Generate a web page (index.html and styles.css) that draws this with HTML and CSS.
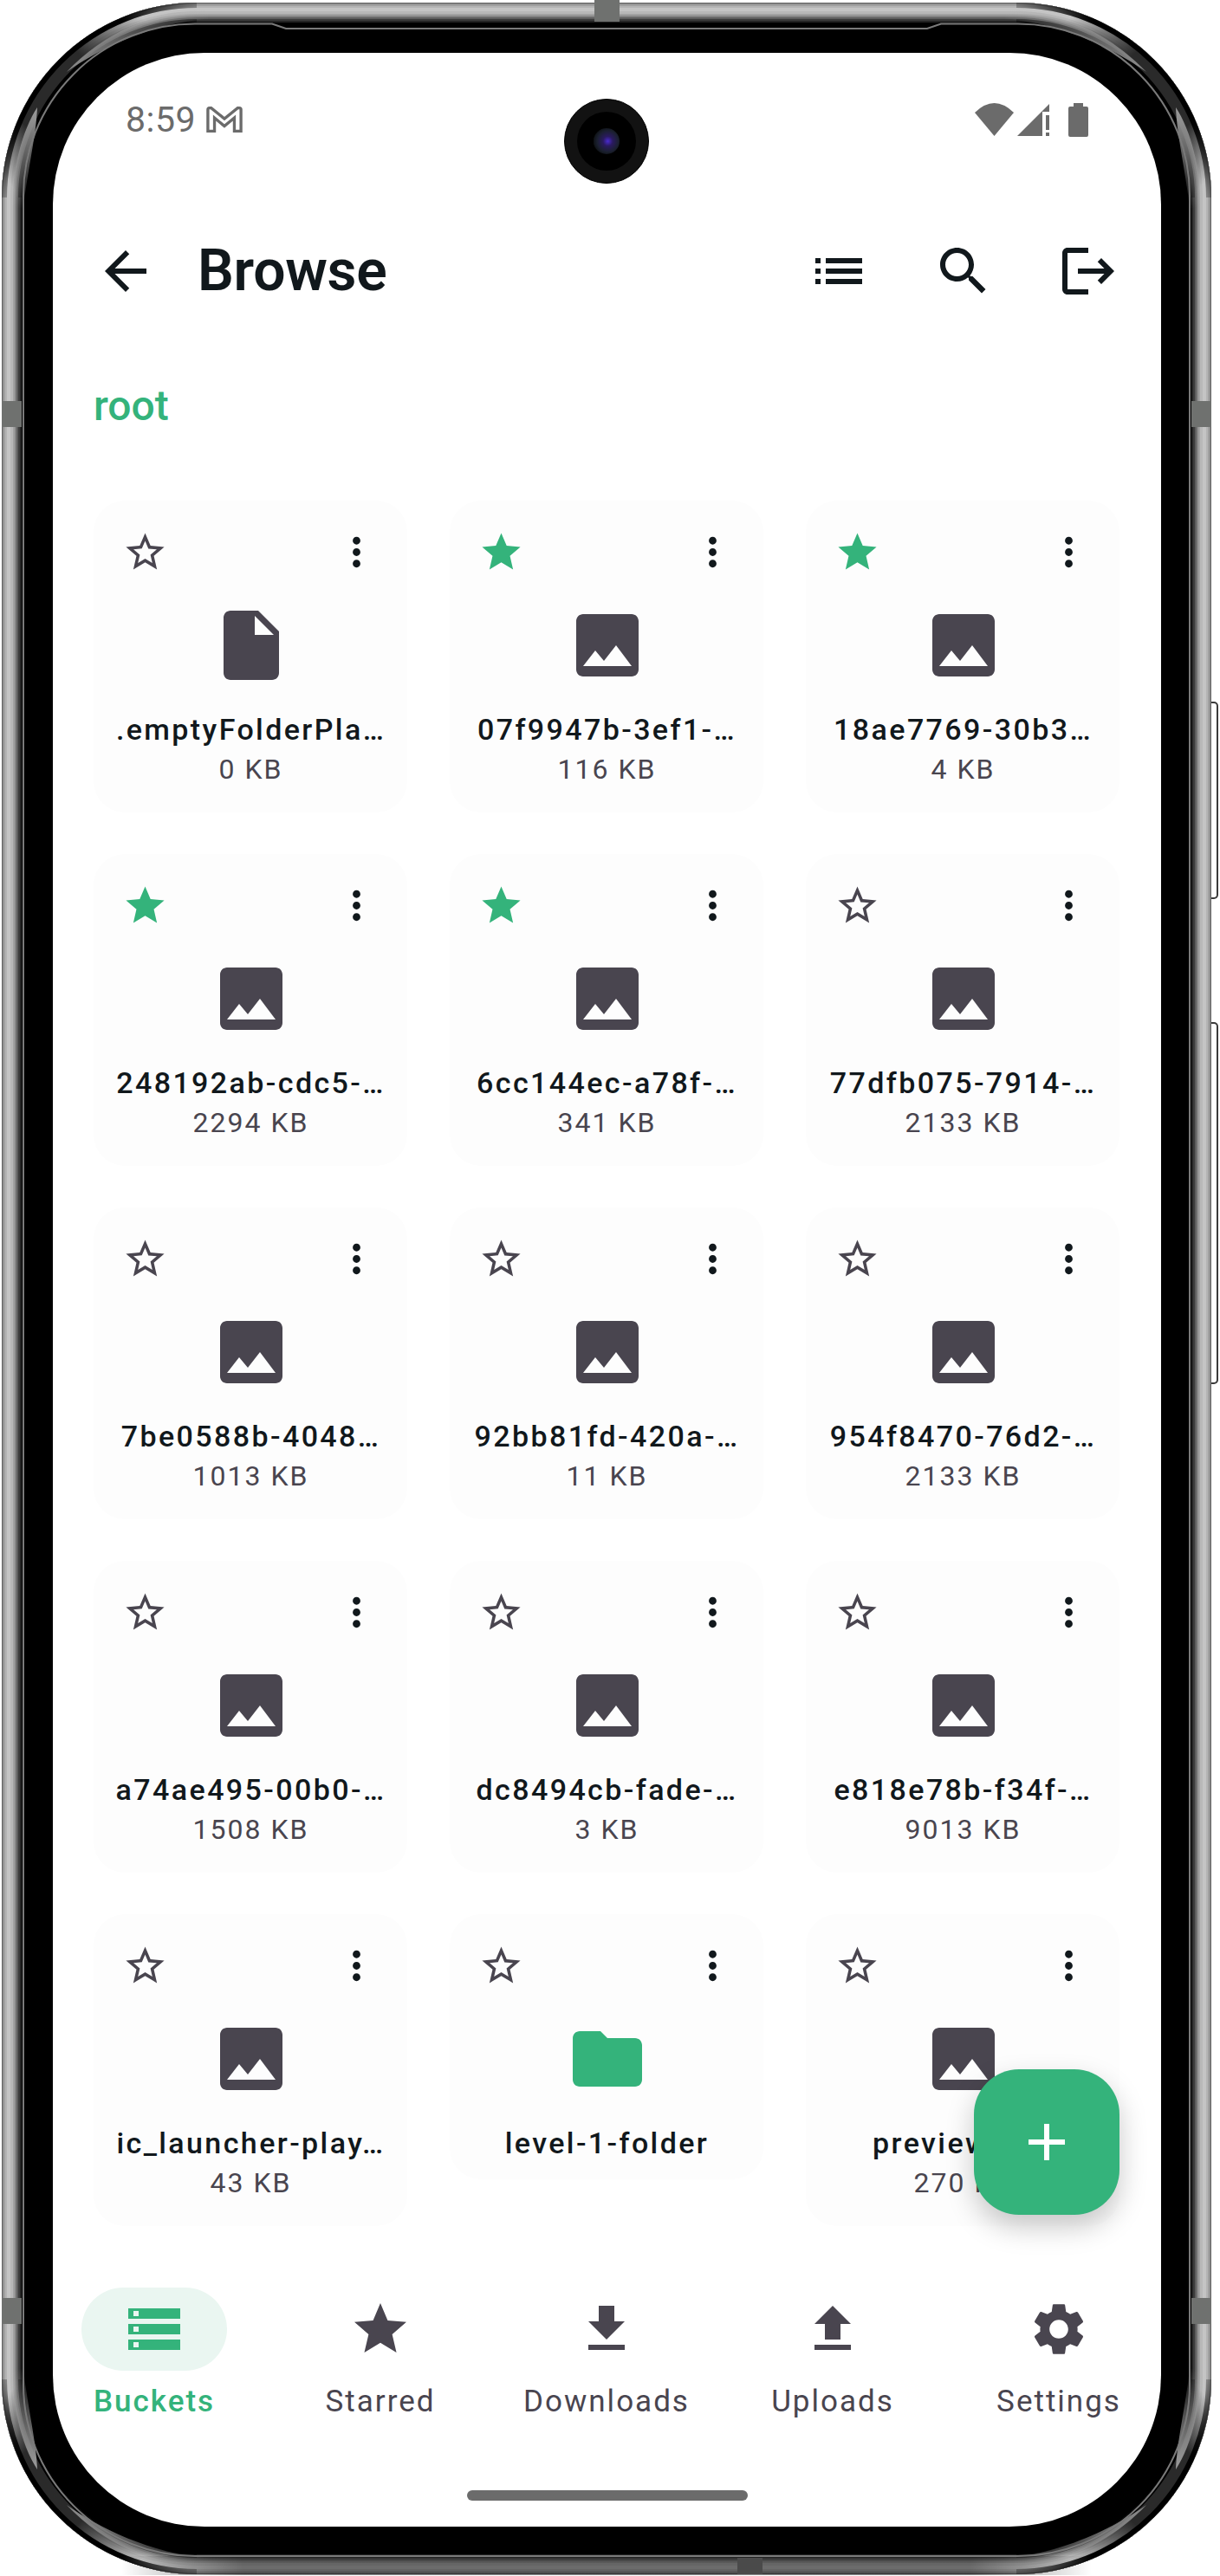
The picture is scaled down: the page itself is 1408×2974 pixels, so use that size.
FILE: index.html
```html
<!DOCTYPE html>
<html lang="en">
<head>
    <meta charset="UTF-8">
    <meta name="viewport" content="width=device-width, initial-scale=1.0">
    <title>Browse</title>
    <link rel="stylesheet" href="styles.css">
</head>
<body>
    <!-- Shared icons -->
    <svg class="icon-sprite" aria-hidden="true">
        <symbol id="i-star-line" viewBox="0 0 24 24"><path d="M22 9.24l-7.19-.62L12 2 9.19 8.63 2 9.24l5.46 4.73L5.82 21 12 17.27 18.18 21l-1.63-7.03L22 9.24zM12 15.4l-3.76 2.27 1-4.28-3.32-2.88 4.38-.38L12 6.1l1.71 4.04 4.38.38-3.32 2.88 1 4.28L12 15.4z"/></symbol>
        <symbol id="i-star" viewBox="0 0 24 24"><path d="M12 17.27L18.18 21l-1.64-7.03L22 9.24l-7.19-.61L12 2 9.19 8.63 2 9.24l5.46 4.73L5.82 21z"/></symbol>
        <symbol id="i-more" viewBox="0 0 24 24"><path d="M12 8c1.1 0 2-.9 2-2s-.9-2-2-2-2 .9-2 2 .9 2 2 2zm0 2c-1.1 0-2 .9-2 2s.9 2 2 2 2-.9 2-2-.9-2-2-2zm0 6c-1.1 0-2 .9-2 2s.9 2 2 2 2-.9 2-2-.9-2-2-2z"/></symbol>
        <symbol id="i-image" viewBox="0 0 24 24"><path d="M21 19V5c0-1.1-.9-2-2-2H5c-1.1 0-2 .9-2 2v14c0 1.1.9 2 2 2h14c1.1 0 2-.9 2-2zM8.500 13.500l2.500 3.010L14.500 12l4.500 6H5l3.500-4.500z"/></symbol>
        <symbol id="i-file" viewBox="0 0 24 24"><path d="M6 2c-1.100 0-2 .9-2 2v16c0 1.100.9 2 2 2h12c1.100 0 2-.9 2-2V8l-6-6H6zm7 7V3.500L18.500 9H13z"/></symbol>
        <symbol id="i-folder" viewBox="0 0 24 24"><path d="M10 4H4c-1.100 0-1.990.9-1.990 2L2 18c0 1.100.9 2 2 2h16c1.100 0 2-.9 2-2V8c0-1.100-.9-2-2-2h-8l-2-2z"/></symbol>
    </svg>

    <div class="device">
        <div class="screen">
            <div class="status-bar">
                <div class="status-left">
                    <span class="clock">8:59</span>
                    <svg class="gmail" viewBox="0 0 44 32"><path d="M2 30V4q0-2 2-2h2l16 13L38 2h2q2 0 2 2v26h-8V14L22 24 10 14v16z"/></svg>
                </div>
                <div class="status-right">
                    <svg class="wifi" viewBox="0 0 45 38"><path d="M22.500 38L0 11Q22.500-11 45 11z"/></svg>
                    <svg class="signal" viewBox="0 0 37 37"><path d="M37 0v9h-8v28H0z"/><rect x="33" y="13" width="4" height="17"/><rect x="33" y="33" width="4" height="4"/></svg>
                    <svg class="battery" viewBox="0 0 23 39"><path d="M6 0h11v4h4q2 0 2 2v31q0 2-2 2H2q-2 0-2-2V6q0-2 2-2h4z"/></svg>
                </div>
            </div>

            <header class="app-bar">
                <svg class="bar-icon" viewBox="0 0 24 24"><path d="M20 11H7.830l5.590-5.590L12 4l-8 8 8 8 1.410-1.410L7.830 13H20v-2z"/></svg>
                <h1 class="title">Browse</h1>
                <svg class="bar-icon" viewBox="0 0 24 24"><path d="M3 13h2v-2H3v2zm0 4h2v-2H3v2zm0-8h2V7H3v2zm4 4h14v-2H7v2zm0 4h14v-2H7v2zM7 7v2h14V7H7z"/></svg>
                <svg class="bar-icon" viewBox="0 0 24 24"><path d="M15.500 14h-.79l-.28-.27C15.410 12.590 16 11.110 16 9.500 16 5.910 13.090 3 9.500 3S3 5.910 3 9.500 5.910 16 9.500 16c1.610 0 3.090-.59 4.230-1.570l.27.28v.79l5 4.990L20.490 19l-4.990-5zm-6 0C7.010 14 5 11.990 5 9.500S7.010 5 9.500 5 14 7.010 14 9.500 11.990 14 9.500 14z"/></svg>
                <svg class="bar-icon" viewBox="0 0 24 24"><path d="M17 7l-1.410 1.410L18.170 11H8v2h10.170l-2.580 2.580L17 17l5-5zM4 5h8V3H4c-1.100 0-2 .9-2 2v14c0 1.100.9 2 2 2h8v-2H4V5z"/></svg>
            </header>

            <div class="crumb">root</div>

            <main class="file-grid">
                <div class="card">
                    <div class="card-top"><svg class="star"><use href="#i-star-line"/></svg><svg class="more"><use href="#i-more"/></svg></div>
                    <svg class="file-icon"><use href="#i-file"/></svg>
                    <div class="name">.emptyFolderPla…</div>
                    <div class="size">0 KB</div>
                </div>
                <div class="card">
                    <div class="card-top"><svg class="star on"><use href="#i-star"/></svg><svg class="more"><use href="#i-more"/></svg></div>
                    <svg class="file-icon"><use href="#i-image"/></svg>
                    <div class="name">07f9947b-3ef1-…</div>
                    <div class="size">116 KB</div>
                </div>
                <div class="card">
                    <div class="card-top"><svg class="star on"><use href="#i-star"/></svg><svg class="more"><use href="#i-more"/></svg></div>
                    <svg class="file-icon"><use href="#i-image"/></svg>
                    <div class="name">18ae7769-30b3…</div>
                    <div class="size">4 KB</div>
                </div>

                <div class="card">
                    <div class="card-top"><svg class="star on"><use href="#i-star"/></svg><svg class="more"><use href="#i-more"/></svg></div>
                    <svg class="file-icon"><use href="#i-image"/></svg>
                    <div class="name">248192ab-cdc5-…</div>
                    <div class="size">2294 KB</div>
                </div>
                <div class="card">
                    <div class="card-top"><svg class="star on"><use href="#i-star"/></svg><svg class="more"><use href="#i-more"/></svg></div>
                    <svg class="file-icon"><use href="#i-image"/></svg>
                    <div class="name">6cc144ec-a78f-…</div>
                    <div class="size">341 KB</div>
                </div>
                <div class="card">
                    <div class="card-top"><svg class="star"><use href="#i-star-line"/></svg><svg class="more"><use href="#i-more"/></svg></div>
                    <svg class="file-icon"><use href="#i-image"/></svg>
                    <div class="name">77dfb075-7914-…</div>
                    <div class="size">2133 KB</div>
                </div>

                <div class="card">
                    <div class="card-top"><svg class="star"><use href="#i-star-line"/></svg><svg class="more"><use href="#i-more"/></svg></div>
                    <svg class="file-icon"><use href="#i-image"/></svg>
                    <div class="name">7be0588b-4048…</div>
                    <div class="size">1013 KB</div>
                </div>
                <div class="card">
                    <div class="card-top"><svg class="star"><use href="#i-star-line"/></svg><svg class="more"><use href="#i-more"/></svg></div>
                    <svg class="file-icon"><use href="#i-image"/></svg>
                    <div class="name">92bb81fd-420a-…</div>
                    <div class="size">11 KB</div>
                </div>
                <div class="card">
                    <div class="card-top"><svg class="star"><use href="#i-star-line"/></svg><svg class="more"><use href="#i-more"/></svg></div>
                    <svg class="file-icon"><use href="#i-image"/></svg>
                    <div class="name">954f8470-76d2-…</div>
                    <div class="size">2133 KB</div>
                </div>

                <div class="card">
                    <div class="card-top"><svg class="star"><use href="#i-star-line"/></svg><svg class="more"><use href="#i-more"/></svg></div>
                    <svg class="file-icon"><use href="#i-image"/></svg>
                    <div class="name">a74ae495-00b0-…</div>
                    <div class="size">1508 KB</div>
                </div>
                <div class="card">
                    <div class="card-top"><svg class="star"><use href="#i-star-line"/></svg><svg class="more"><use href="#i-more"/></svg></div>
                    <svg class="file-icon"><use href="#i-image"/></svg>
                    <div class="name">dc8494cb-fade-…</div>
                    <div class="size">3 KB</div>
                </div>
                <div class="card">
                    <div class="card-top"><svg class="star"><use href="#i-star-line"/></svg><svg class="more"><use href="#i-more"/></svg></div>
                    <svg class="file-icon"><use href="#i-image"/></svg>
                    <div class="name">e818e78b-f34f-…</div>
                    <div class="size">9013 KB</div>
                </div>

                <div class="card">
                    <div class="card-top"><svg class="star"><use href="#i-star-line"/></svg><svg class="more"><use href="#i-more"/></svg></div>
                    <svg class="file-icon"><use href="#i-image"/></svg>
                    <div class="name">ic_launcher-play…</div>
                    <div class="size">43 KB</div>
                </div>
                <div class="card folder">
                    <div class="card-top"><svg class="star"><use href="#i-star-line"/></svg><svg class="more"><use href="#i-more"/></svg></div>
                    <svg class="file-icon green"><use href="#i-folder"/></svg>
                    <div class="name">level-1-folder</div>
                </div>
                <div class="card">
                    <div class="card-top"><svg class="star"><use href="#i-star-line"/></svg><svg class="more"><use href="#i-more"/></svg></div>
                    <svg class="file-icon"><use href="#i-image"/></svg>
                    <div class="name">preview.png</div>
                    <div class="size">270 KB</div>
                </div>
            </main>

            <nav class="tabs">
                <div class="tab active">
                    <div class="tab-pill"><svg viewBox="0 0 24 24"><path d="M2 20h20v-4H2v4zm2-3h2v2H4v-2zM2 4v4h20V4H2zm4 3H4V5h2v2zm-4 7h20v-4H2v4zm2-3h2v2H4v-2z"/></svg></div>
                    <span>Buckets</span>
                </div>
                <div class="tab">
                    <div class="tab-pill"><svg><use href="#i-star"/></svg></div>
                    <span>Starred</span>
                </div>
                <div class="tab">
                    <div class="tab-pill"><svg viewBox="0 0 24 24"><path d="M19 9h-4V3H9v6H5l7 7 7-7zM5 18v2h14v-2H5z"/></svg></div>
                    <span>Downloads</span>
                </div>
                <div class="tab">
                    <div class="tab-pill"><svg viewBox="0 0 24 24"><path d="M9 16h6v-6h4l-7-7-7 7h4zm-4 2h14v2H5z"/></svg></div>
                    <span>Uploads</span>
                </div>
                <div class="tab">
                    <div class="tab-pill"><svg viewBox="0 0 24 24"><path d="M19.140 12.940c.04-.3.06-.61.06-.94 0-.32-.02-.64-.07-.94l2.030-1.580c.18-.14.23-.41.12-.61l-1.920-3.320c-.12-.22-.37-.29-.59-.22l-2.390.96c-.5-.38-1.030-.7-1.620-.94l-.36-2.540c-.04-.24-.24-.41-.48-.41h-3.840c-.24 0-.43.17-.47.41l-.36 2.540c-.59.24-1.130.57-1.620.94l-2.390-.96c-.22-.08-.47 0-.59.22L2.740 8.870c-.12.21-.08.47.12.61l2.030 1.580c-.05.3-.09.63-.09.94s.02.64.07.94l-2.030 1.580c-.18.14-.23.41-.12.61l1.920 3.320c.12.22.37.29.59.22l2.390-.96c.5.38 1.030.7 1.620.94l.36 2.54c.05.24.24.41.48.41h3.840c.24 0 .44-.17.47-.41l.36-2.540c.59-.24 1.130-.56 1.620-.94l2.390.96c.22.08.47 0 .59-.22l1.920-3.320c.12-.22.07-.47-.12-.61l-2.010-1.580zM12 15.600c-1.980 0-3.600-1.620-3.600-3.600s1.620-3.600 3.600-3.600 3.600 1.620 3.600 3.600-1.620 3.600-3.600 3.600z"/></svg></div>
                    <span>Settings</span>
                </div>
            </nav>

            <div class="home-bar"></div>

            <!-- Things that float over the screen -->
            <div class="camera"><div class="camera-well"><div class="camera-lens"></div></div></div>
            <button class="fab"><svg viewBox="0 0 24 24"><path d="M19 13h-6v6h-2v-6H5v-2h6V5h2v6h6v2z"/></svg></button>
        </div>

        <!-- Frame details -->
        <svg class="frame-art" viewBox="0 0 1408 2974">
            <defs>
                <linearGradient id="corner-shade" gradientUnits="userSpaceOnUse" x1="10" y1="250" x2="250" y2="10">
                    <stop offset="0.08" stop-color="#2a2a2a" stop-opacity="0"/>
                    <stop offset="0.26" stop-color="#2a2a2a"/>
                    <stop offset="0.56" stop-color="#2a2a2a"/>
                    <stop offset="0.8" stop-color="#2a2a2a" stop-opacity="0"/>
                </linearGradient>
                <linearGradient id="corner-edge" gradientUnits="userSpaceOnUse" x1="4" y1="290" x2="290" y2="4">
                    <stop offset="0.05" stop-color="#000" stop-opacity="0"/>
                    <stop offset="0.3" stop-color="#000"/>
                    <stop offset="0.7" stop-color="#000"/>
                    <stop offset="0.95" stop-color="#000" stop-opacity="0"/>
                </linearGradient>
                <linearGradient id="lens-side" gradientUnits="userSpaceOnUse" x1="43" y1="124" x2="20" y2="240">
                    <stop offset="0" stop-color="#9a9a9a"/>
                    <stop offset="1" stop-color="#c0c0c0" stop-opacity="0"/>
                </linearGradient>
                <linearGradient id="lens-top" gradientUnits="userSpaceOnUse" x1="77" y1="83" x2="240" y2="14">
                    <stop offset="0" stop-color="#8a8a8a"/>
                    <stop offset="1" stop-color="#b8b8b8" stop-opacity="0"/>
                </linearGradient>
                <linearGradient id="bottom-shade" gradientUnits="userSpaceOnUse" x1="0" y1="0" x2="1400" y2="0">
                    <stop offset="0.1" stop-color="#000" stop-opacity="0"/>
                    <stop offset="0.2" stop-color="#000" stop-opacity="0.45"/>
                    <stop offset="0.8" stop-color="#000" stop-opacity="0.45"/>
                    <stop offset="0.9" stop-color="#000" stop-opacity="0"/>
                </linearGradient>
                <g id="corner">
                    <path d="M14 228A213 213 0 0 1 227 15" fill="none" stroke="url(#corner-shade)" stroke-width="22"/>
                    <path d="M5 228A222 222 0 0 1 227 6" fill="none" stroke="url(#corner-edge)" stroke-width="6"/>
                    <path d="M23 228A204 204 0 0 1 227 24" fill="none" stroke="url(#corner-edge)" stroke-width="4"/>
                    <path d="M13 240C14 195 26 150 43 124C42 155 32 195 27 240Z" fill="url(#lens-side)"/>
                    <path d="M240 11C175 13 120 38 77 83C112 58 175 26 240 22Z" fill="url(#lens-top)"/>
                </g>
            </defs>
            <use href="#corner"/>
            <use href="#corner" transform="translate(1400 0) scale(-1 1)"/>
            <use href="#corner" transform="translate(0 2975) scale(1 -1)"/>
            <use href="#corner" transform="translate(1400 2975) scale(-1 -1)"/>
            <rect x="0" y="2951" width="1400" height="22" fill="url(#bottom-shade)"/>
            <path d="M314 27.500L330 33H1070L1086 27.500H1175A198 198 0 0 1 1373 226V2752A198 198 0 0 1 1175 2951H225A198 198 0 0 1 27 2752V226A198 198 0 0 1 225 27.500Z" fill="none" stroke="#7a7a7a" stroke-width="2"/>
        </svg>

        <div class="band band-top"></div>
        <div class="band band-bottom"></div>
        <div class="band band-side band-left-1"></div>
        <div class="band band-side band-left-2"></div>
        <div class="band band-side band-right-1"></div>
        <div class="band band-side band-right-2"></div>
        <div class="side-button btn-power"></div>
        <div class="side-button btn-volume"></div>
    </div>
</body>
</html>
```

FILE: styles.css
```css
/* Page */
* {
    box-sizing: border-box;
}

body {
    margin: 0;
    width: 1408px;
    height: 2974px;
    overflow: hidden;
    background-color: #fff;
    font-family: Roboto, "Liberation Sans", sans-serif;
}

.icon-sprite {
    display: none;
}

/* Phone frame */
.device {
    position: relative;
    width: 1396px;
    height: 2969px;
    margin: 3px 0 0 2px;
    padding: 58px 58px 55px 59px;
    background-color: #000;
    border-radius: 225px;
    box-shadow:
        inset 0 0 0 1px #6a6a6a,
        inset 0 0 0 2px #858585,
        inset 0 0 0 4px #a0a0a0,
        inset 0 0 0 6px #b4b4b4,
        inset 0 0 0 10px #c4c4c4,
        inset 0 0 0 13px #b8b8b8,
        inset 0 0 0 15px #a2a2a2,
        inset 0 0 0 17px #848484,
        inset 0 0 0 19px #5e5e5e,
        inset 0 0 0 21px #3c3c3c,
        inset 0 0 0 23px #242424;
}

.frame-art {
    position: absolute;
    left: -2px;
    top: -3px;
    width: 1408px;
    height: 2974px;
    pointer-events: none;
}

.band {
    position: absolute;
    background-color: #6f716f;
}

.band-top {
    left: 684px;
    top: -3px;
    width: 29px;
    height: 25px;
}

.band-bottom {
    left: 849px;
    top: 2950px;
    width: 29px;
    height: 19px;
    background-color: #4a4a4a;
}

.band-side {
    width: 23px;
    height: 30px;
}

.band-left-1 { left: 0; top: 460px; }
.band-left-2 { left: 0; top: 2650px; }
.band-right-1 { right: 0; top: 460px; }
.band-right-2 { right: 0; top: 2650px; }

.side-button {
    position: absolute;
    left: 1396px;
    width: 8px;
    background-color: #fff;
    border: 2px solid #3a3a3a;
    border-left: none;
    border-radius: 0 5px 5px 0;
}

.btn-power { top: 807px; height: 228px; }
.btn-volume { top: 1177px; height: 418px; }

/* Screen */
.screen {
    position: relative;
    width: 1279px;
    height: 2856px;
    overflow: hidden;
    background-color: #fff;
    border-radius: 175px;
}

.camera {
    position: absolute;
    left: 590px;
    top: 53px;
    width: 98px;
    height: 98px;
    padding: 14px;
    background-color: #121212;
    border: 1px solid #000;
    border-radius: 50%;
}

.camera-well {
    display: flex;
    align-items: center;
    justify-content: center;
    height: 100%;
    background-color: #000;
    border-radius: 50%;
}

.camera-lens {
    width: 30px;
    height: 30px;
    background: radial-gradient(circle at 55% 50%, #4a2bd0 0, #2a1a60 25%, #1b2030 55%, #101418 72%, #5c5c5c 88%, #333 100%);
    border-radius: 50%;
}

.status-bar {
    display: flex;
    justify-content: space-between;
    align-items: center;
    height: 154px;
    padding: 0 84px;
}

.status-bar svg {
    display: block;
    fill: #6b6b6b;
}

.status-left,
.status-right {
    display: flex;
    align-items: center;
}

.clock {
    font-size: 41px;
    letter-spacing: 0.5px;
    color: #6b6b6b;
    line-height: 44px;
}

.status-bar .gmail {
    width: 42px;
    height: 32px;
    margin-left: 12px;
    fill: none;
    stroke: #6b6b6b;
    stroke-width: 3.5;
}

.wifi { width: 45px; height: 38px; }
.signal { width: 37px; height: 37px; margin-left: 4px; }
.battery { width: 23px; height: 39px; margin-left: 22px; }

.app-bar {
    display: flex;
    align-items: center;
    height: 144px;
    margin-top: 26px;
    padding: 0 48px;
}

.bar-icon {
    flex: none;
    width: 72px;
    height: 72px;
    fill: #11181c;
}

.bar-icon + .title + .bar-icon ~ .bar-icon {
    margin-left: 72px;
}

.title {
    flex: 1;
    margin: 0 0 0 47px;
    font-size: 66px;
    font-weight: 600;
    letter-spacing: -0.3px;
    line-height: 80px;
    color: #11181c;
}

.crumb {
    margin: 54px 0 0 47px;
    font-size: 48px;
    font-weight: 500;
    line-height: 60px;
    color: #34b37b;
}

/* Files */
.file-grid {
    display: grid;
    grid-template-columns: repeat(3, 362px);
    align-items: start;
    column-gap: 49px;
    row-gap: 48px;
    margin-top: 79px;
    padding-left: 47px;
}

.card {
    display: flex;
    flex-direction: column;
    align-items: center;
    height: 360px;
    padding: 33px 32px 0 33px;
    background-color: #fdfdfd;
    border-radius: 36px;
}

.card.folder {
    height: 306px;
}

.card-top {
    display: flex;
    justify-content: space-between;
    width: 100%;
}

.star,
.more {
    width: 53px;
    height: 53px;
}

.star { fill: #49454f; }
.star.on { fill: #34b37b; }
.more { fill: #11181c; }

.file-icon {
    flex: none;
    width: 96px;
    height: 96px;
    margin-top: 33px;
    fill: #49454f;
}

.file-icon.green {
    fill: #34b37b;
}

.name,
.size {
    width: 340px;
    flex: none;
    line-height: 46px;
    text-align: center;
    white-space: nowrap;
}

.name {
    margin-top: 26px;
    font-size: 34px;
    font-weight: 500;
    letter-spacing: 2.4px;
    color: #11181c;
}

.size {
    font-size: 32px;
    letter-spacing: 2px;
    color: #49454f;
}

/* Bottom navigation */
.tabs {
    display: grid;
    grid-template-columns: repeat(5, 168px);
    column-gap: 93px;
    margin-top: 71px;
    padding-left: 33px;
}

.tab {
    display: flex;
    flex-direction: column;
    align-items: center;
    font-size: 35px;
    line-height: 44px;
    letter-spacing: 2px;
    white-space: nowrap;
    color: #49454f;
}

.tab span {
    margin-top: 14px;
}

.tab-pill {
    display: flex;
    align-items: center;
    justify-content: center;
    width: 168px;
    height: 96px;
    border-radius: 48px;
}

.tab-pill svg {
    width: 72px;
    height: 72px;
    fill: #49454f;
}

.tab.active {
    font-weight: 500;
    color: #34b37b;
}

.tab.active .tab-pill {
    background-color: #eaf6f1;
}

.tab.active .tab-pill svg {
    fill: #34b37b;
}

.home-bar {
    width: 324px;
    height: 12px;
    margin: 80px auto 0;
    background-color: #6b6b6b;
    border-radius: 6px;
}

.fab {
    position: absolute;
    left: 1063px;
    top: 2328px;
    display: flex;
    align-items: center;
    justify-content: center;
    width: 168px;
    height: 168px;
    padding: 0;
    background-color: #34b37b;
    border: none;
    border-radius: 52px;
    box-shadow: 0 14px 32px rgba(0, 0, 0, 0.22);
}

.fab svg {
    width: 72px;
    height: 72px;
    fill: #fff;
}
```
